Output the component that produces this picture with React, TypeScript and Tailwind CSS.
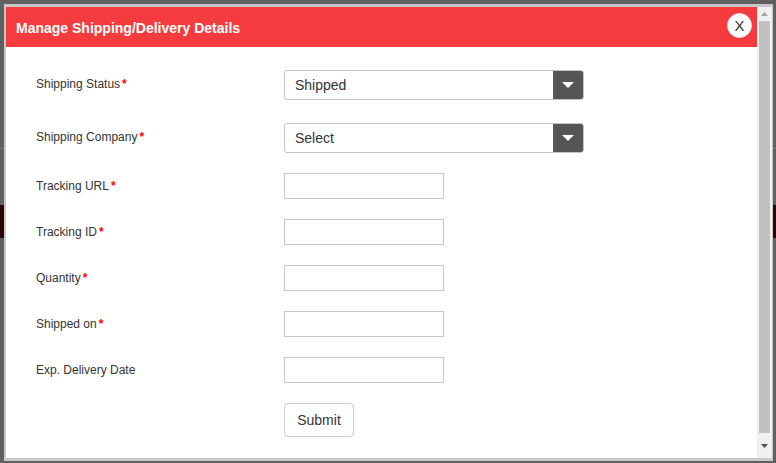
import { ReactNode } from 'react'

const font = { fontFamily: '"Liberation Sans", Arial, sans-serif' }

export default function App() {
  return (
    <div className="relative h-[463px] w-[776px] overflow-hidden bg-[#606060]" style={font}>
      {/* page behind the overlay */}
      <div className="absolute left-0 top-[205px] h-[33px] w-[4px] bg-[#2a0606]" />
      <div className="absolute right-0 top-[205px] h-[33px] w-[3px] bg-[#2a0606]" />
      <div className="absolute left-0 top-[148px] h-px w-[4px] bg-[#777]" />
      <div className="absolute right-0 top-[148px] h-px w-[3px] bg-[#777]" />

      <div className="absolute left-[4px] top-[4px] flex h-[457px] w-[769px] bg-[#c8c8c8] pb-[3px] pl-[2px] pr-px pt-[3px]">
        <div className="flex min-w-0 flex-1 flex-col bg-white">
          <Header />
          <div className="flex flex-col pl-[30px] pt-[23px]">
            <Row label="Shipping Status" required className="h-[30px]">
              <Select value="Shipped" />
            </Row>
            <Row label="Shipping Company" required className="mt-[23px] h-[30px]">
              <Select value="Select" />
            </Row>
            <Row label="Tracking URL" required className="mt-[20px] h-[26px]" top="pt-[6px]">
              <TextInput />
            </Row>
            <Row label="Tracking ID" required className="mt-[20px] h-[26px]" top="pt-[6px]">
              <TextInput />
            </Row>
            <Row label="Quantity" required className="mt-[20px] h-[26px]" top="pt-[6px]">
              <TextInput />
            </Row>
            <Row label="Shipped on" required className="mt-[20px] h-[26px]" top="pt-[6px]">
              <TextInput />
            </Row>
            <Row label="Exp. Delivery Date" className="mt-[20px] h-[26px]" top="pt-[6px]">
              <TextInput />
            </Row>
            <div className="mt-[20px] pl-[248px]">
              <button className="h-[34px] w-[70px] rounded-[4px] border border-[#ccc] bg-white text-[14px] text-[#333]">
                Submit
              </button>
            </div>
          </div>
        </div>
        <Scrollbar />
      </div>
    </div>
  )
}

function Header() {
  return (
    <div className="relative flex h-[40px] shrink-0 items-center bg-[#f43c3e] pl-[10px] pt-[3px]">
      <h2 className="text-[14px] font-bold text-white">Manage Shipping/Delivery Details</h2>
      <button className="absolute right-[5px] top-[6px] flex h-[25px] w-[25px] items-center justify-center rounded-full border border-[#ddd] bg-white text-[15px] leading-none text-[#333]">
        X
      </button>
    </div>
  )
}

function Row({
  label,
  required = false,
  className = '',
  top = 'pt-[7px]',
  children,
}: {
  label: string
  required?: boolean
  className?: string
  top?: string
  children: ReactNode
}) {
  return (
    <div className={`flex ${className}`}>
      <label className={`w-[248px] shrink-0 text-[12px] leading-[14px] text-[#333] ${top}`}>
        {label}
        {required && <span className="ml-[2px] font-bold text-[#f00]">*</span>}
      </label>
      {children}
    </div>
  )
}

function Select({ value }: { value: string }) {
  return (
    <div className="flex h-[30px] w-[300px] overflow-hidden rounded-[3px] border border-[#c4c4c4] bg-white">
      <span className="flex flex-1 items-center pl-[10px] pt-px text-[14px] text-[#333]">{value}</span>
      <span className="flex w-[30px] items-center justify-center bg-[#555]">
        <svg width="12" height="6" viewBox="0 0 12 6">
          <path d="M0 0h12L6 6z" fill="#fff" />
        </svg>
      </span>
    </div>
  )
}

function TextInput() {
  return <input className="h-[26px] w-[160px] border border-[#c8c8c8] bg-white px-2 text-[13px] outline-none" />
}

function Scrollbar() {
  return (
    <div className="flex w-[15px] shrink-0 flex-col items-center bg-[#f0f0f0]">
      <div className="flex h-[14px] items-center justify-center">
        <svg width="7" height="4" viewBox="0 0 7 4">
          <path d="M0 4L3.5 0L7 4z" fill="#a3a3a3" />
        </svg>
      </div>
      <div className="h-[412px] w-[11px] bg-[#c1c1c1]" />
      <div className="flex flex-1 items-center justify-center">
        <svg width="7" height="4" viewBox="0 0 7 4">
          <path d="M0 0h7L3.5 4z" fill="#505050" />
        </svg>
      </div>
    </div>
  )
}
